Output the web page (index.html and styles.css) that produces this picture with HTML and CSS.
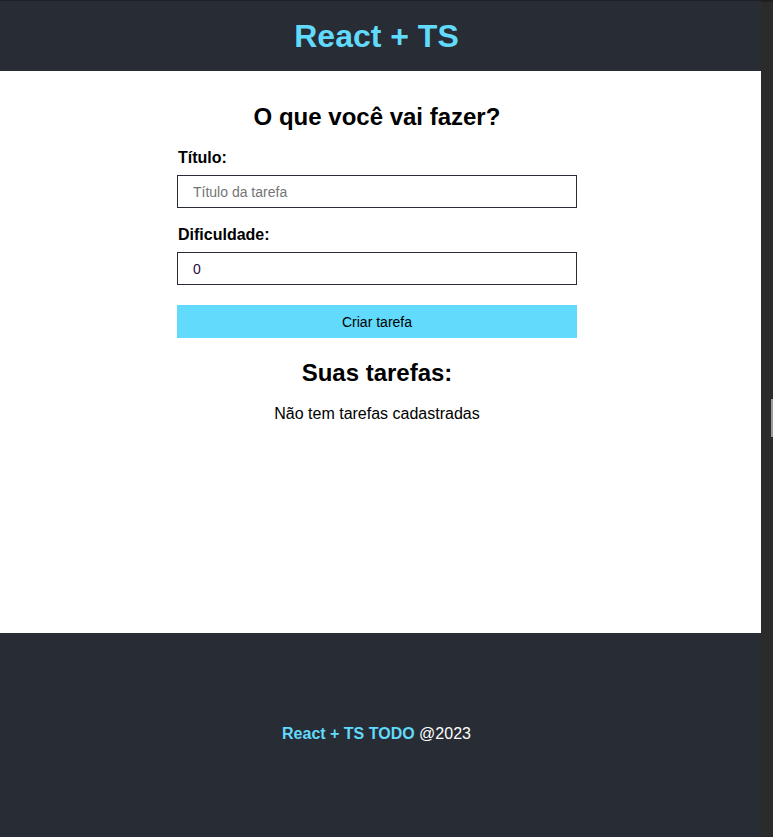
FILE: index.html
```html
<!DOCTYPE html>
<html lang="pt-BR">
<head>
<meta charset="utf-8">
<title>React + TS</title>
<link rel="stylesheet" href="styles.css">
</head>
<body>
<div class="window">
  <div class="page">
    <header class="header">
      <h1 class="brand">React + TS</h1>
    </header>
    <main class="main">
      <div class="column">
        <h2 class="heading">O que você vai fazer?</h2>
        <form class="form">
          <div class="field">
            <label class="label" for="title">Título:</label>
            <input class="input" id="title" type="text" placeholder="Título da tarefa">
          </div>
          <div class="field">
            <label class="label" for="difficulty">Dificuldade:</label>
            <input class="input input-value" id="difficulty" type="text" value="0">
          </div>
          <button class="button" type="button">Criar tarefa</button>
        </form>
        <h2 class="heading heading-list">Suas tarefas:</h2>
        <p class="empty">Não tem tarefas cadastradas</p>
      </div>
    </main>
    <footer class="footer">
      <p class="footer-text"><span class="footer-brand">React + TS TODO</span> @2023</p>
    </footer>
  </div>
  <div class="scrollbar"><div class="thumb"></div></div>
</div>
</body>
</html>
```
FILE: styles.css
```css
* { box-sizing: border-box; }
html, body { margin: 0; padding: 0; }
body {
  font-family: "Liberation Sans", Arial, sans-serif;
  background: #282c34;
  color: #000;
}
.window {
  display: flex;
  width: 773px;
  height: 837px;
  overflow: hidden;
}
.page {
  width: 761px;
  display: flex;
  flex-direction: column;
}
.header {
  height: 71px;
  background: #282c34;
  display: flex;
  align-items: center;
  justify-content: center;
  padding-right: 8px;
  border-top: 1px solid #1e2127;
}
.brand {
  margin: 0;
  font-size: 32px;
  font-weight: bold;
  color: #61dafb;
}
.main {
  height: 562px;
  background: #fff;
  display: flex;
  justify-content: center;
  padding-right: 7px;
}
.column {
  width: 400px;
  display: flex;
  flex-direction: column;
  align-items: center;
}
.heading {
  margin: 0;
  font-size: 24px;
  font-weight: bold;
  line-height: 28px;
}
.main .heading:first-child { margin-top: 32px; }
.form {
  width: 400px;
  margin-top: 18px;
  display: flex;
  flex-direction: column;
}
.field {
  display: flex;
  flex-direction: column;
  margin-bottom: 18px;
}
.field + .field { margin-bottom: 20px; }
.label {
  font-size: 16px;
  font-weight: bold;
  line-height: 18px;
  margin: 0 0 8px 1px;
}
.input {
  height: 33px;
  border: 1px solid #282c34;
  padding: 0 15px;
  font-family: "Liberation Sans", Arial, sans-serif;
  font-size: 14px;
  color: #2a0a3a;
  outline: none;
}
.input::placeholder { color: #757575; }
.button {
  height: 33px;
  border: none;
  background: #61dafb;
  font-family: "Liberation Sans", Arial, sans-serif;
  font-size: 14px;
  color: #000;
  padding: 0;
}
.heading-list { margin-top: 21px; }
.empty {
  margin: 18px 0 0;
  font-size: 16px;
  line-height: 18px;
}
.footer {
  flex: 1;
  background: #282c34;
  display: flex;
  align-items: center;
  justify-content: center;
  padding-right: 8px;
  padding-bottom: 2px;
}
.footer-text {
  margin: 0;
  font-size: 16px;
  color: #fff;
}
.footer-brand {
  color: #61dafb;
  font-weight: bold;
}
.scrollbar {
  position: relative;
  width: 12px;
  height: 837px;
  background: #2b2b2b;
  border-top: 2px solid #1f1f1f;
}
.thumb {
  position: absolute;
  right: 0;
  top: 397px;
  width: 2px;
  height: 38px;
  background: #9a9a9a;
}
```
